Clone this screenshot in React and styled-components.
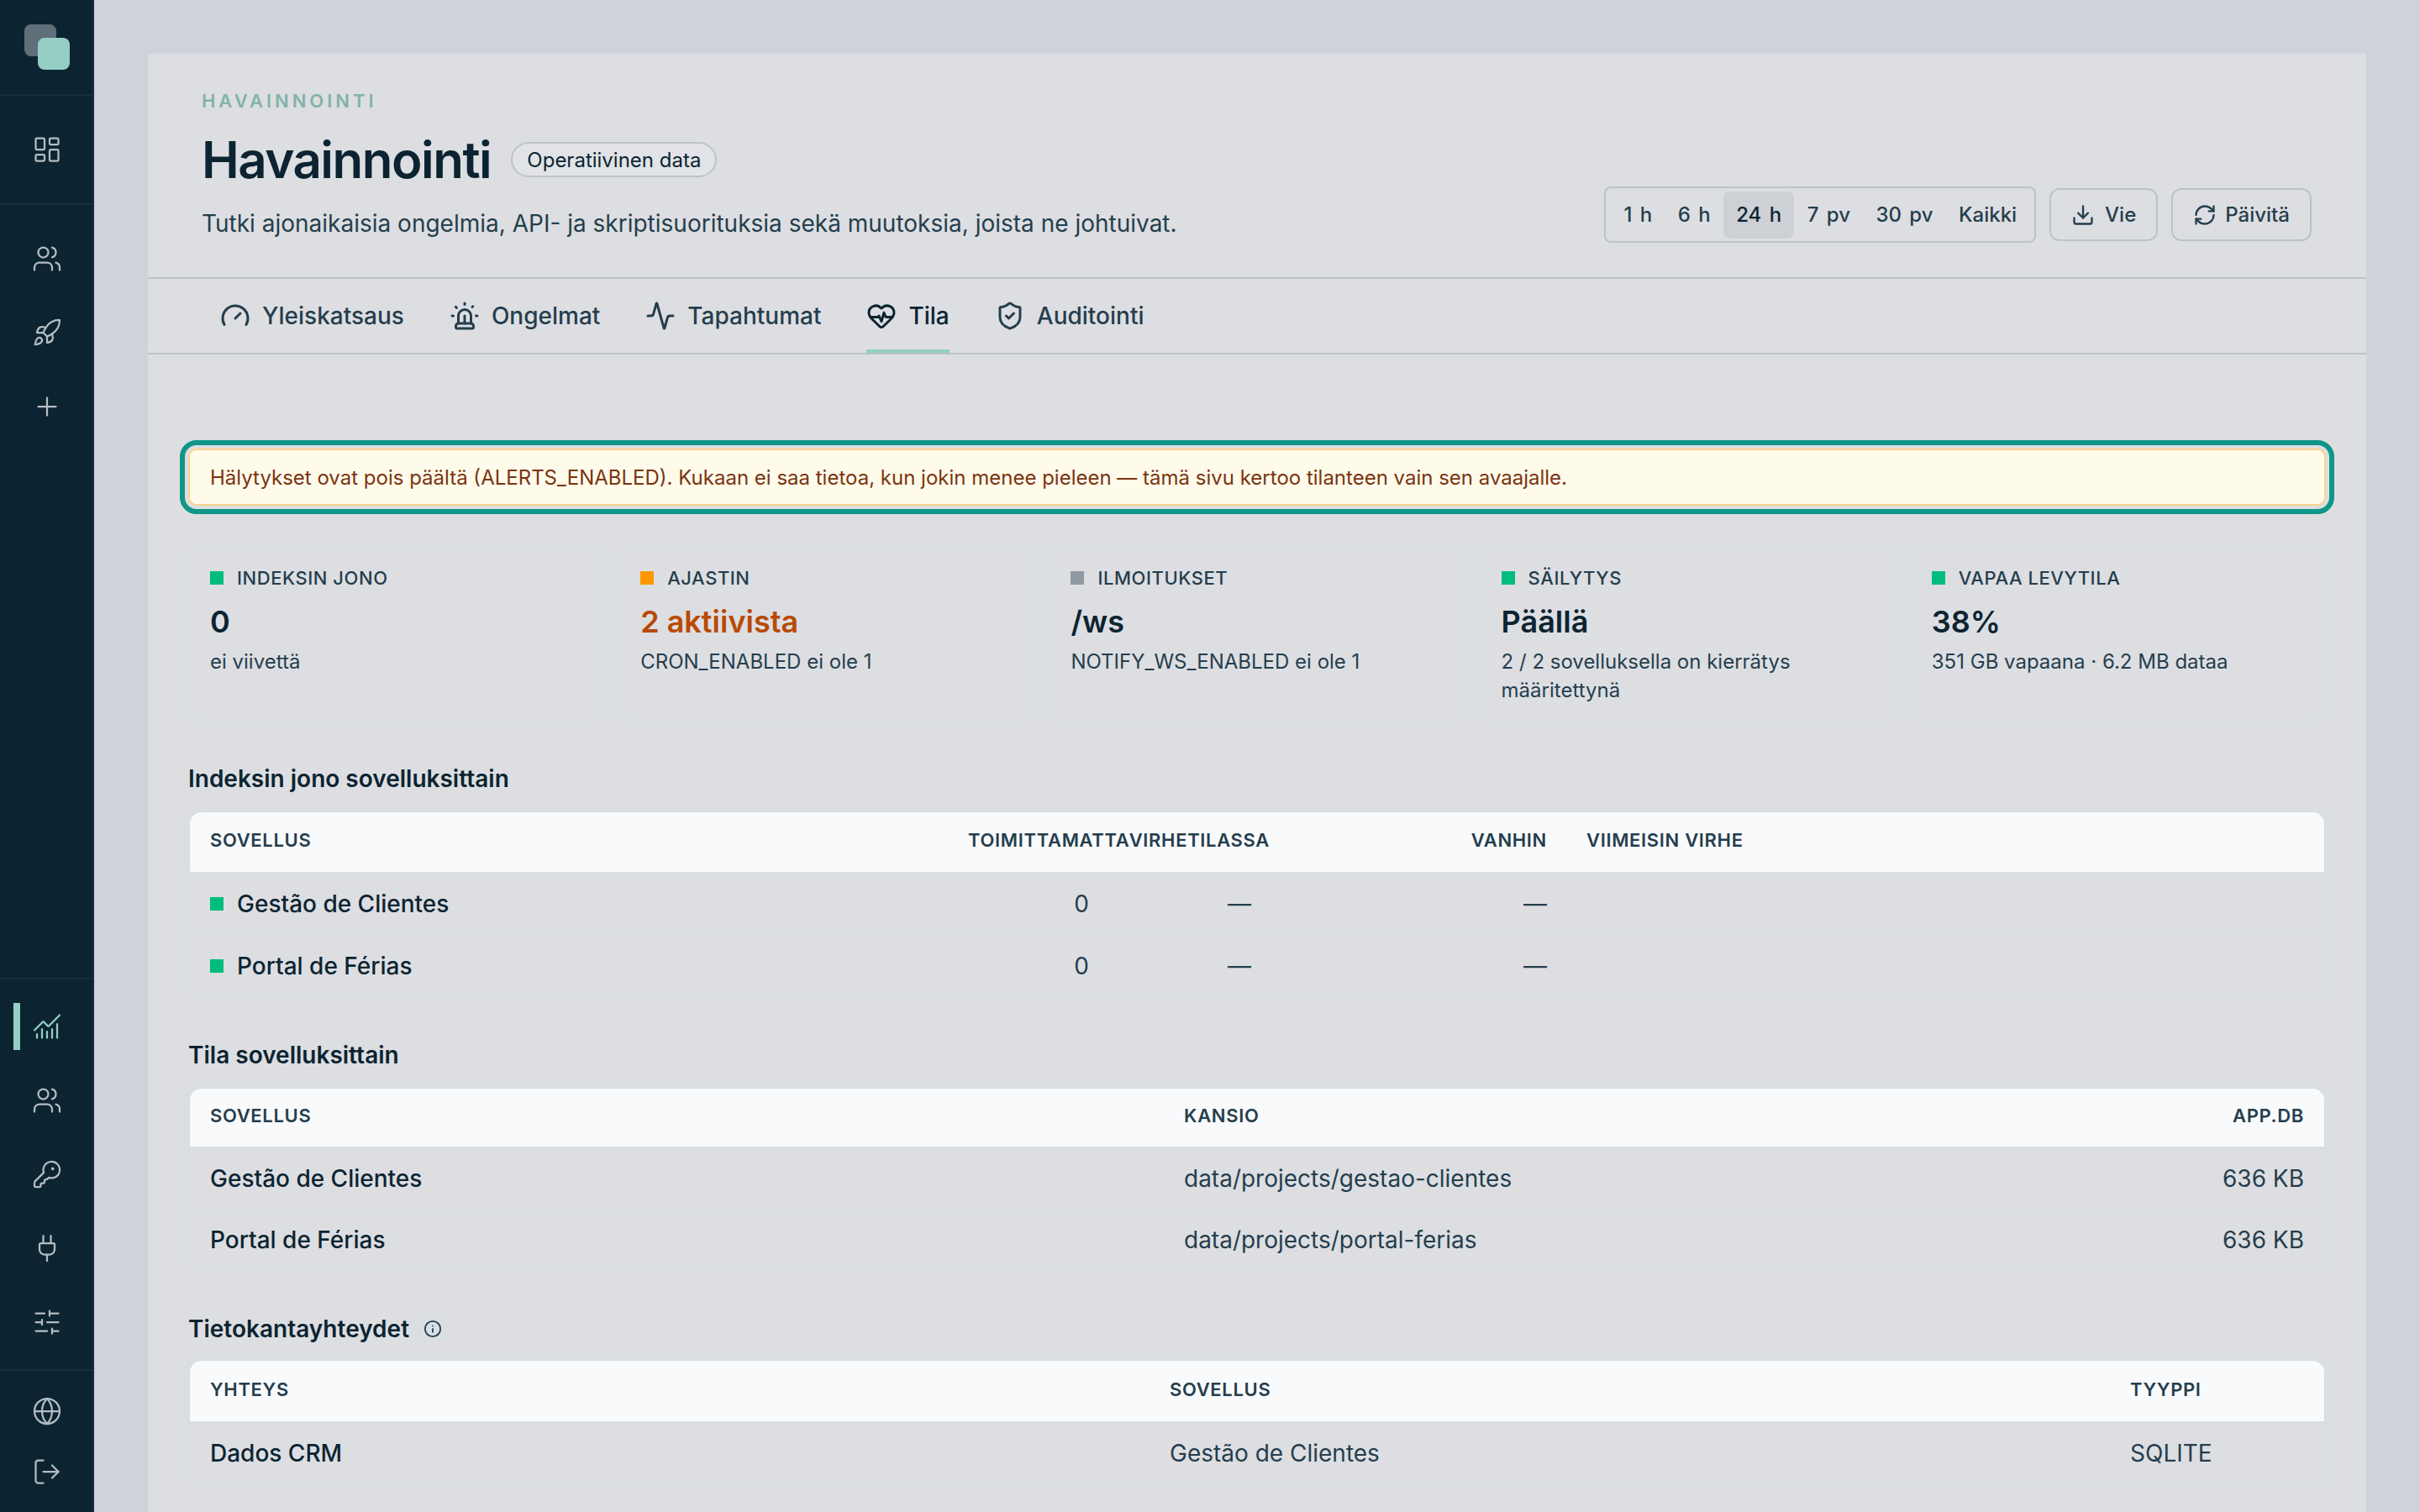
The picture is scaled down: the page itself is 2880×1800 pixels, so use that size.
import React from "react";
import styled, { createGlobalStyle } from "styled-components";
import {
  LayoutDashboard, Users, Rocket, Plus, ChartNoAxesCombined, KeyRound, Plug, SlidersHorizontal,
  Globe, LogOut, Gauge, Siren, Activity, HeartPulse, ShieldCheck, Download, RefreshCw, Info,
} from "lucide-react";

const Global = createGlobalStyle`
  html, body { margin: 0; padding: 0; height: 100%; overflow: hidden; background: #cfd2da; }
  body { font-family: Inter, "Liberation Sans", sans-serif; color: #0c2431; }
  * { box-sizing: border-box; }
`;

const Shell = styled.div`display: flex; height: 1800px; overflow: hidden;`;
const Sidebar = styled.aside`
  width: 112px; flex: none; background: #0c2431; box-shadow: inset -2px 0 #102c3c;
  display: flex; flex-direction: column; color: #b4bcc2;
`;
const LogoBox = styled.div`height: 114px; flex: none; border-bottom: 2px solid #14303f; padding: 29px 0 0 29px;`;
const NavSection = styled.div`
  display: flex; flex-direction: column; flex: ${p => p.$grow ? 1 : "none"};
  padding: ${p => p.$pad || "0"}; border-bottom: ${p => p.$line ? "2px solid #14303f" : "none"};
`;
const NavItem = styled.div`
  height: ${p => p.$h || 88}px; display: flex; align-items: center; justify-content: center; position: relative;
  color: ${p => p.$active ? "#94cec5" : "#b4bcc2"};
`;
const ActiveBar = styled.span`position: absolute; left: 16px; top: 16px; width: 8px; height: 56px; background: #94cec5;`;

const Main = styled.main`flex: 1; min-width: 0; padding: 64px 64px 0;`;
const Card = styled.div`background: #dddee2; min-height: 1800px;`;
const Head = styled.header`
  display: flex; justify-content: space-between; align-items: flex-end;
  height: 268px; padding: 0 65px 41px 64px; border-bottom: 2px solid #bcc3ca;
`;
const HeadText = styled.div`display: flex; flex-direction: column; padding-bottom: 3px;`;
const Eyebrow = styled.div`font-size: 22px; font-weight: 600; letter-spacing: 0.18em; color: #82b3aa; line-height: 28px; margin-bottom: 20px;`;
const TitleRow = styled.div`display: flex; align-items: center; gap: 24px; margin-bottom: 20px;`;
const Title = styled.h1`margin: 0; font-size: 60px; line-height: 72px; font-weight: 600; letter-spacing: -1.5px; color: #0c2431;`;
const Badge = styled.span`
  height: 42px; display: inline-flex; align-items: center; padding: 0 17px; border: 2px solid #bcc3ca;
  border-radius: 21px; font-size: 24px; color: #0c2431; background: #e1e3e6;
`;
const Sub = styled.p`margin: 0; font-size: 28px; line-height: 40px; color: #253e4d;`;
const Controls = styled.div`display: flex; align-items: center; gap: 16px;`;
const Range = styled.div`
  display: flex; align-items: center; gap: 0.5px; height: 67px; padding: 0 6px; border: 2px solid #bcc3ca; border-radius: 8px;
`;
const RangeItem = styled.button`
  font: 500 24px Inter, sans-serif; word-spacing: 3px; border: 0; height: 56px; padding: 0 15px; border-radius: 8px; color: #253e4d;
  background: ${p => p.$active ? "#cdd0d5" : "transparent"};
  ${p => p.$active && "color: #0c2431;"}
`;
const Btn = styled.button`
  display: inline-flex; align-items: center; gap: ${p => p.$gap || 10}px; height: 63px; padding: 0 24px; background: transparent;
  border: 2px solid #bcc3ca; border-radius: 12px; font: 500 24px Inter, sans-serif; color: #253e4d;
`;

const TabBar = styled.nav`
  display: flex; gap: 54px; height: 90px; padding-left: 86px; border-bottom: 2px solid #bcc3ca;
`;
const Tab = styled.div`
  display: flex; align-items: center; gap: 14px; font-size: 28px; font-weight: 500; height: 88px;
  color: ${p => p.$active ? "#0c2431" : "#253e4d"};
  border-bottom: 4px solid ${p => p.$active ? "#94cec5" : "transparent"};
  padding-top: 4px;
`;

const Content = styled.div`padding: 112px 48px 0;`;
const Alert = styled.div`
  height: 68px; display: flex; align-items: center; padding: 0 24px; background: #fffbeb; border: 2px solid #fdd38a;
  border-radius: 10px; outline: 6px solid #0f9688; outline-offset: 4px; color: #7a3410; font-size: 24px;
`;
const Stats = styled.div`display: grid; grid-template-columns: repeat(5, 1fr); gap: 17px; margin: 49px 0 50px;`;
const Stat = styled.div`height: 208px; border: 2px solid #d6dee3; border-radius: 16px; padding: 21px 24px;`;
const StatLabel = styled.div`display: flex; align-items: center; gap: 16px; font-size: 22px; letter-spacing: 0.025em; font-weight: 500; line-height: 28px; color: #253e4d;`;
const Dot = styled.i`display: block; flex: none; width: 16px; height: 16px; background: ${p => p.$c};`;
const StatValue = styled.div`font-size: 36px; font-weight: 600; line-height: 48px; margin-top: 14px; color: ${p => p.$c || "#0c2431"};`;
const StatSub = styled.div`font-size: 24px; line-height: 34px; margin-top: 7px; color: #253e4d;`;

const SectionTitle = styled.h2`
  display: flex; align-items: center; gap: 14px; margin: 0 0 ${p => p.$mb || 20}px; height: 36px;
  font-size: 28px; font-weight: 600; color: #0c2431;
`;
const InfoBtn = styled.span`width: 28px; height: 28px; display: flex; align-items: center; justify-content: center; background: #d9e0e5; color: #253e4d;`;
const Table = styled.div`border: 2px solid #d6dee3; border-radius: 16px; overflow: hidden; margin-bottom: ${p => p.$mb || 50}px;`;
const Row = styled.div`
  display: grid; grid-template-columns: ${p => p.$cols}; align-items: center; padding: 0 24px;
  height: ${p => p.$h || 74}px;
  border-top: 2px solid #d6dee3;
`;
const HeadRow = styled(Row)`background: #f9fafc; border-top: 0; padding-bottom: 5px; height: ${p => p.$h || 71}px;`;
const HeadCell = styled.div`
  font-size: 22px; font-weight: 600; letter-spacing: 0.03em; color: #253e4d; white-space: nowrap;
  text-align: ${p => p.$r ? "right" : "left"}; padding-left: ${p => p.$pl || 0}px;
`;
const Cell = styled.div`
  display: flex; align-items: center; gap: 16px; font-size: 28px; white-space: nowrap;
  font-weight: ${p => p.$strong ? 500 : 400}; color: ${p => p.$strong ? "#0c2431" : "#253e4d"};
  justify-content: ${p => p.$r ? "flex-end" : "flex-start"}; padding-right: ${p => p.$pr || 0}px;
`;

const I = { size: 36, strokeWidth: 1.5 };
const T = { size: 36, strokeWidth: 2 };
const COLS1 = "902px 144px 215px 330px 1fr";
const COLS2 = "1159px 1fr 300px";
const COLS3 = "1142px 1fr 207px";

const stats = [
  ["#00bd7e", "INDEKSIN JONO", "0", "ei viivettä"],
  ["#ff9800", "AJASTIN", "2 aktiivista", "CRON_ENABLED ei ole 1", "#b84a05"],
  ["#8f99a2", "ILMOITUKSET", "/ws", "NOTIFY_WS_ENABLED ei ole 1"],
  ["#00bd7e", "SÄILYTYS", "Päällä", "2 / 2 sovelluksella on kierrätys määritettynä"],
  ["#00bd7e", "VAPAA LEVYTILA", "38%", "351 GB vapaana · 6.2 MB dataa"],
];

export default function App() {
  return (
    <Shell>
      <Global />
      <Sidebar>
        <LogoBox>
          <svg width="54" height="54" viewBox="0 0 54 54">
            <rect x="0" y="0" width="38" height="38" rx="8" fill="#5e6f7a" />
            <rect x="16" y="16" width="38" height="38" rx="8" fill="#94cec5" />
          </svg>
        </LogoBox>
        <NavSection $pad="20px 0" $line><NavItem><LayoutDashboard {...I} /></NavItem></NavSection>
        <NavSection $pad="20px 0 0" $grow $line>
          <NavItem><Users {...I} /></NavItem>
          <NavItem><Rocket {...I} /></NavItem>
          <NavItem><Plus {...I} /></NavItem>
        </NavSection>
        <NavSection $pad="12px 0" $line>
          <NavItem $active><ActiveBar /><ChartNoAxesCombined {...I} /></NavItem>
          <NavItem><Users {...I} /></NavItem>
          <NavItem><KeyRound {...I} /></NavItem>
          <NavItem><Plug {...I} /></NavItem>
          <NavItem><SlidersHorizontal {...I} /></NavItem>
        </NavSection>
        <NavSection $pad="12px 0">
          <NavItem $h={72}><Globe {...I} /></NavItem>
          <NavItem $h={72}><LogOut {...I} /></NavItem>
        </NavSection>
      </Sidebar>
      <Main>
        <Card>
          <Head>
            <HeadText>
              <Eyebrow>HAVAINNOINTI</Eyebrow>
              <TitleRow><Title>Havainnointi</Title><Badge>Operatiivinen data</Badge></TitleRow>
              <Sub>Tutki ajonaikaisia ongelmia, API- ja skriptisuorituksia sekä muutoksia, joista ne johtuivat.</Sub>
            </HeadText>
            <Controls>
              <Range>
                {["1 h", "6 h", "24 h", "7 pv", "30 pv", "Kaikki"].map(x => <RangeItem key={x} $active={x === "24 h"}>{x}</RangeItem>)}
              </Range>
              <Btn $gap={12}><Download size={28} strokeWidth={2} />Vie</Btn>
              <Btn><RefreshCw size={28} strokeWidth={2} />Päivitä</Btn>
            </Controls>
          </Head>
          <TabBar>
            <Tab><Gauge {...T} />Yleiskatsaus</Tab>
            <Tab><Siren {...T} />Ongelmat</Tab>
            <Tab><Activity {...T} />Tapahtumat</Tab>
            <Tab $active><HeartPulse {...T} />Tila</Tab>
            <Tab><ShieldCheck {...T} />Auditointi</Tab>
          </TabBar>
          <Content>
            <Alert>Hälytykset ovat pois päältä (ALERTS_ENABLED). Kukaan ei saa tietoa, kun jokin menee pieleen — tämä sivu kertoo tilanteen vain sen avaajalle.</Alert>
            <Stats>
              {stats.map(([c, l, v, s, vc]) => (
                <Stat key={l}>
                  <StatLabel><Dot $c={c} />{l}</StatLabel>
                  <StatValue $c={vc}>{v}</StatValue>
                  <StatSub>{s}</StatSub>
                </Stat>
              ))}
            </Stats>
            <SectionTitle>Indeksin jono sovelluksittain</SectionTitle>
            <Table>
              <HeadRow $cols={COLS1}>
                <HeadCell>SOVELLUS</HeadCell><HeadCell $r>TOIMITTAMATTA</HeadCell><HeadCell $r>VIRHETILASSA</HeadCell><HeadCell $r>VANHIN</HeadCell><HeadCell $pl={47}>VIIMEISIN VIRHE</HeadCell>
              </HeadRow>
              {["Gestão de Clientes", "Portal de Férias"].map(n => (
                <Row key={n} $cols={COLS1}>
                  <Cell $strong><Dot $c="#00bd7e" />{n}</Cell><Cell $r>0</Cell><Cell $r $pr={22}>—</Cell><Cell $r>—</Cell><Cell />
                </Row>
              ))}
            </Table>
            <SectionTitle>Tila sovelluksittain</SectionTitle>
            <Table $mb={51}>
              <HeadRow $cols={COLS2} $h={69}><HeadCell>SOVELLUS</HeadCell><HeadCell>KANSIO</HeadCell><HeadCell $r>APP.DB</HeadCell></HeadRow>
              {[["Gestão de Clientes", "gestao-clientes"], ["Portal de Férias", "portal-ferias"]].map(([n, f]) => (
                <Row key={n} $cols={COLS2} $h={73}>
                  <Cell $strong>{n}</Cell><Cell>data/projects/{f}</Cell><Cell $r>636 KB</Cell>
                </Row>
              ))}
            </Table>
            <SectionTitle $mb={18}>Tietokantayhteydet<InfoBtn><Info size={22} strokeWidth={2} /></InfoBtn></SectionTitle>
            <Table>
              <HeadRow $cols={COLS3} $h={72}><HeadCell>YHTEYS</HeadCell><HeadCell>SOVELLUS</HeadCell><HeadCell>TYYPPI</HeadCell></HeadRow>
              <Row $cols={COLS3}><Cell $strong>Dados CRM</Cell><Cell>Gestão de Clientes</Cell><Cell>SQLITE</Cell></Row>
            </Table>
          </Content>
        </Card>
      </Main>
    </Shell>
  );
}
